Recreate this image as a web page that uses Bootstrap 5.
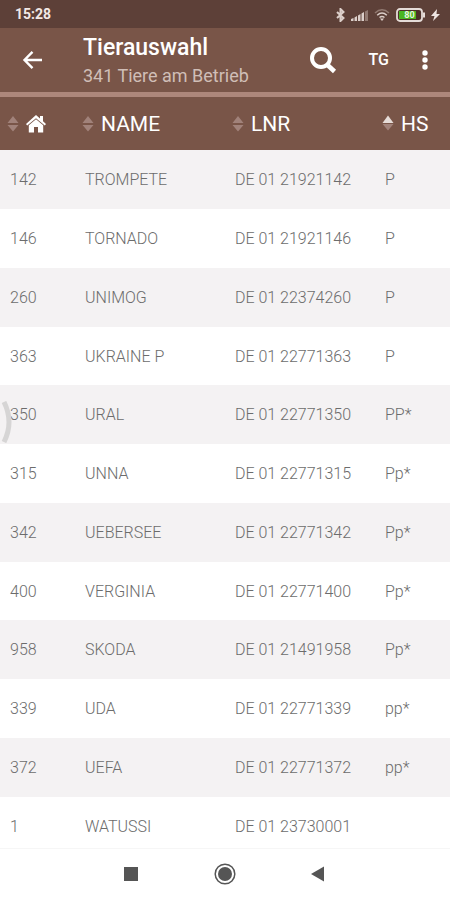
<!DOCTYPE html>
<html lang="de">
<head>
<meta charset="utf-8">
<meta name="viewport" content="width=device-width, initial-scale=1">
<title>Tierauswahl</title>
<link href="https://cdn.jsdelivr.net/npm/bootstrap@5.3.0/dist/css/bootstrap.min.css" rel="stylesheet">
<style>
  body { font-family: Roboto, "Liberation Sans", sans-serif; background: #fff; }
  svg { display: block; flex-shrink: 0; }
  .screen { height: 100vh; }
  .status-bar { background: #5d4038; height: 28px; color: #f3e9e6; font-size: 14px; font-weight: 700; padding: 1px 10px 0 15px; }
  .status-icons { gap: 6px; }
  .app-bar { background: #795548; height: 69px; border-bottom: 5px solid #ad877b; color: #fff; padding-left: 20px; padding-right: 13px; }
  .icon-btn { background: none; border: 0; color: #fff; padding: 0; }
  .app-title { font-size: 23px; font-weight: 500; line-height: 28px; }
  .app-sub { font-size: 18px; line-height: 27px; color: #d0beb7; }
  .heading-block { margin-left: 38px; padding-top: 3px; }
  .tg-btn { font-size: 16px; font-weight: 500; }
  .actions { gap: 30px; }
  .animals { table-layout: fixed; font-size: 16px; line-height: 24px; color: #6c6c6c; font-weight: 300; }
  .animals th { background: #795548; height: 53px; padding: 0 0 0 7px; vertical-align: middle; }
  .animals td { height: 59px; padding: 1px 0 0 10px; vertical-align: middle; white-space: nowrap; }
  .animals tr:nth-child(4n) td { height: 58px; }
  .animals tbody tr:nth-child(odd) { background: #f4f2f3; }
  .w-sixth { width: 16.6667%; }
  .w-third { width: 33.3333%; }
  .sort-btn { background: none; border: 0; padding: 0; color: #fff; font-size: 21px; font-weight: 400; line-height: 28px; gap: 7px; }
  .scroll-handle { position: absolute; left: 0; top: 304px; }
  .nav-keys { height: 52px; background: #fff; border-top: 1px solid #f6f6f6; padding-bottom: 2px; }
  .nav-keys button { color: #555; }
  .nav-inner { gap: 70px; }
  .key { width: 24px; height: 24px; }
</style>
<script src="https://cdn.jsdelivr.net/npm/bootstrap@5.3.0/dist/js/bootstrap.bundle.min.js"></script>
</head>
<body>
<svg width="0" height="0" class="position-absolute" aria-hidden="true">
  <symbol id="sort" viewBox="0 0 12 18"><path d="M6 1l5.500 7h-11zM6 16.500l5.500-6.500h-11z" fill="#a1827a"/></symbol>
</svg>
<div class="screen d-flex flex-column overflow-hidden">
  <div class="status-bar d-flex align-items-center justify-content-between flex-shrink-0">
    <span>15:28</span>
    <div class="status-icons d-flex align-items-center">
      <svg width="9" height="14" viewBox="0 0 9 14" fill="none" stroke="#dccfca" stroke-width="2"><path d="M1 4l6.500 6L4.500 13V1l3 3L1 10"/></svg>
      <svg width="17" height="12" viewBox="0 0 17 12"><path d="M0 12v-2l2.500-1v3zM3.500 12V8.500L6 7v5zM7 12V6.500L9.500 5v7zM10.500 12V4.500L13 3v9z" fill="#dccfca"/><path d="M14 12V2.500L17 1v11z" fill="#927a72"/></svg>
      <svg width="16" height="13" viewBox="0 0 16 13" fill="none" stroke-width="1.500"><path d="M1 5q7-6.500 14 0" stroke="#927a72"/><path d="M3.200 7.200q4.800-4.400 9.600 0M5.500 9.500q2.500-2 5 0" stroke="#dccfca"/><path d="M6 10.500h4l-2 2.500z" fill="#dccfca"/></svg>
      <svg width="29" height="14" viewBox="0 0 29 14"><rect x="1" y="1" width="25" height="12" rx="3" fill="#4d3129" stroke="#e5dcd8" stroke-width="1.800"/><path d="M27 4.500h2v5h-2z" fill="#e5dcd8"/><rect x="3" y="3" width="17" height="8" fill="#49b522"/><text x="13.500" y="10" font-size="9" font-weight="700" text-anchor="middle" fill="#e6f7df">80</text></svg>
      <svg width="9" height="12" viewBox="0 0 9 12" fill="#eee5e2"><path d="M6 0L0 7h3.500L2 12l7-7H5.500z"/></svg>
    </div>
  </div>

  <header class="app-bar d-flex align-items-center flex-shrink-0">
    <button class="icon-btn" aria-label="Zurück"><svg width="25" height="20" viewBox="0 0 25 20" fill="none" stroke="currentColor" stroke-width="2.400"><path d="M22 10H5M12.500 1.800L4.500 10l8 8.200"/></svg></button>
    <div class="heading-block flex-grow-1 text-nowrap">
      <h1 class="app-title m-0">Tierauswahl</h1>
      <div class="app-sub">341 Tiere am Betrieb</div>
    </div>
    <div class="actions d-flex align-items-center">
      <button class="icon-btn" aria-label="Suchen"><svg width="30" height="28" viewBox="0 0 30 28" fill="none" stroke="currentColor"><circle cx="12" cy="12" r="9" stroke-width="4"/><path d="M18 18.500l7.500 7" stroke-width="4.500"/></svg></button>
      <button class="icon-btn tg-btn">TG</button>
      <button class="icon-btn" aria-label="Mehr"><svg width="18" height="22" viewBox="0 0 18 22" fill="currentColor"><circle cx="6" cy="4" r="2.700"/><circle cx="6" cy="11" r="2.700"/><circle cx="6" cy="18" r="2.700"/></svg></button>
    </div>
  </header>

  <main class="flex-grow-1 overflow-hidden position-relative">
    <table class="animals w-100">
      <colgroup><col class="w-sixth"><col class="w-third"><col class="w-third"><col class="w-sixth"></colgroup>
      <thead>
        <tr>
          <th scope="col"><button class="sort-btn d-flex align-items-center" aria-label="Stallnummer"><svg width="12" height="18"><use href="#sort"/></svg><svg width="20" height="18" viewBox="0 0 20 18" fill="#fff"><path d="M10 0l4 3.600V1h3v5.300L20 9l-1.200 1.500L10 3.200l-8.800 7.300L0 9z"/><path d="M10 4.200l7.200 6V17.500H12V12H8v5.500H2.800v-7.300z"/></svg></button></th>
          <th scope="col"><button class="sort-btn d-flex align-items-center"><svg width="12" height="18"><use href="#sort"/></svg>NAME</button></th>
          <th scope="col"><button class="sort-btn d-flex align-items-center"><svg width="12" height="18"><use href="#sort"/></svg>LNR</button></th>
          <th scope="col"><button class="sort-btn d-flex align-items-center"><svg width="12" height="18" viewBox="0 0 12 18"><path d="M6 .5L11.500 8H.5z" fill="#e6dcd8"/><path d="M6 15.500l5.500-6.500H.5z" fill="#a1827a"/></svg>HS</button></th>
        </tr>
      </thead>
      <tbody>
        <tr><td>142</td><td>TROMPETE</td><td>DE 01 21921142</td><td>P</td></tr>
        <tr><td>146</td><td>TORNADO</td><td>DE 01 21921146</td><td>P</td></tr>
        <tr><td>260</td><td>UNIMOG</td><td>DE 01 22374260</td><td>P</td></tr>
        <tr><td>363</td><td>UKRAINE P</td><td>DE 01 22771363</td><td>P</td></tr>
        <tr><td>350</td><td>URAL</td><td>DE 01 22771350</td><td>PP*</td></tr>
        <tr><td>315</td><td>UNNA</td><td>DE 01 22771315</td><td>Pp*</td></tr>
        <tr><td>342</td><td>UEBERSEE</td><td>DE 01 22771342</td><td>Pp*</td></tr>
        <tr><td>400</td><td>VERGINIA</td><td>DE 01 22771400</td><td>Pp*</td></tr>
        <tr><td>958</td><td>SKODA</td><td>DE 01 21491958</td><td>Pp*</td></tr>
        <tr><td>339</td><td>UDA</td><td>DE 01 22771339</td><td>pp*</td></tr>
        <tr><td>372</td><td>UEFA</td><td>DE 01 22771372</td><td>pp*</td></tr>
        <tr><td>1</td><td>WATUSSI</td><td>DE 01 23730001</td><td></td></tr>
      </tbody>
    </table>
    <svg class="scroll-handle" width="14" height="42" viewBox="0 0 14 42" fill="none" stroke="#d6d5d5" stroke-width="5"><path d="M4 1q10 20 0 40"/></svg>
  </main>

  <nav class="nav-keys flex-shrink-0 d-flex align-items-center justify-content-center" aria-label="Systemtasten">
    <div class="nav-inner d-flex">
      <button class="icon-btn key" aria-label="Übersicht"><svg width="24" height="24"><path d="M5 5h14v14H5z" fill="currentColor"/></svg></button>
      <button class="icon-btn key" aria-label="Startseite"><svg width="24" height="24"><circle cx="12" cy="12" r="9.800" fill="none" stroke="currentColor" stroke-width="1.500"/><circle cx="12" cy="12" r="7" fill="currentColor"/></svg></button>
      <button class="icon-btn key" aria-label="Zurück"><svg width="24" height="24"><path d="M17 4.500v15L4 12z" fill="currentColor"/></svg></button>
    </div>
  </nav>
</div>
</body>
</html>
